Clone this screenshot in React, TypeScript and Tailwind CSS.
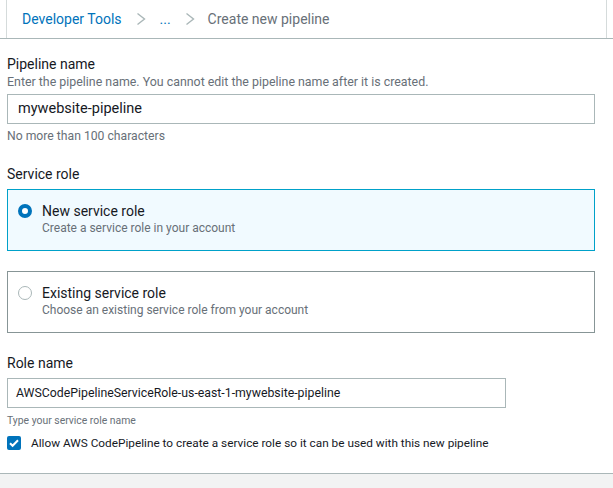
const font = { fontFamily: "Roboto, 'Noto Sans', sans-serif" };

function Chevron() {
  return (
    <svg viewBox="0 0 10 14" className="mx-[14px] h-[14px] w-[10px]">
      <path d="M1.5 1.5L8.5 7L1.5 12.5" fill="none" stroke="#aab7b8" strokeWidth="1.4" />
    </svg>
  );
}

function Tile({
  title,
  desc,
  selected,
}: {
  title: string;
  desc: string;
  selected?: boolean;
}) {
  return (
    <div
      className={
        selected
          ? "mr-[18px] h-[62px] border border-[#00a1c9] bg-[#f1faff] pl-[10px] pt-[11px]"
          : "mr-[18px] h-[62px] border border-[#879596] bg-white pl-[10px] pt-[11px]"
      }
    >
      <div className="flex items-start gap-[10px]">
        <div className="flex h-[20px] items-center">
          {selected ? (
            <span className="block h-[14px] w-[14px] rounded-full border-[4px] border-[#0073bb] bg-white" />
          ) : (
            <span className="block h-[14px] w-[14px] rounded-full border border-[#aab7b8] bg-white" />
          )}
        </div>
        <div>
          <div className="text-[14px] leading-[20px] text-[#16191f]">{title}</div>
          <div className="text-[12px] leading-[14px] text-[#687078]">{desc}</div>
        </div>
      </div>
    </div>
  );
}

export default function App() {
  return (
    <div className="h-[488px] w-[613px] overflow-hidden bg-white" style={font}>
      {/* breadcrumb bar */}
      <div className="border-b border-[#aab7b8]">
        <div className="mx-[6px] flex h-[38px] items-center border-x border-[#d5dbdb] pl-[15px] text-[14px]">
          <span className="text-[#0073bb]">Developer Tools</span>
          <Chevron />
          <span className="text-[#0073bb]">...</span>
          <Chevron />
          <span className="-ml-[1px] text-[#687078]">Create new pipeline</span>
        </div>
      </div>

      <div className="pl-[7px] pt-[15px]">
        <div className="text-[14px] leading-[20px] text-[#16191f]">Pipeline name</div>
        <div className="text-[12.4px] leading-[16px] text-[#687078]">
          Enter the pipeline name. You cannot edit the pipeline name after it is created.
        </div>
        <div className="mr-[18px] mt-[4px] flex h-[30px] items-center border border-[#aab7b8] px-[10px] text-[14.5px] text-[#16191f]">
          mywebsite-pipeline
        </div>
        <div className="mt-[4px] text-[12.2px] leading-[16px] text-[#687078]">
          No more than 100 characters
        </div>

        <div className="mt-[20px] text-[14px] leading-[20px] text-[#16191f]">Service role</div>
        <div className="mt-[5px]">
          <Tile selected title="New service role" desc="Create a service role in your account" />
        </div>
        <div className="mt-[20px]">
          <Tile title="Existing service role" desc="Choose an existing service role from your account" />
        </div>

        <div className="mt-[20px] text-[14px] leading-[20px] text-[#16191f]">Role name</div>
        <div className="mt-[5px] flex h-[30px] w-[499px] items-center border border-[#aab7b8] px-[8px] text-[12.3px] text-[#16191f]">
          AWSCodePipelineServiceRole-us-east-1-mywebsite-pipeline
        </div>
        <div className="mt-[5px] text-[10.4px] leading-[16px] text-[#687078]">Type your service role name</div>
        <div className="mt-[4px] flex items-center gap-[10px]">
          <span className="flex h-[14px] w-[14px] items-center justify-center rounded-[2px] bg-[#0073bb]">
            <svg viewBox="0 0 14 14" className="h-[14px] w-[14px]">
              <path d="M3 7.2l2.6 2.6L11 4.2" fill="none" stroke="#fff" strokeWidth="2" />
            </svg>
          </span>
          <span className="text-[11.8px] leading-[20px] text-[#16191f]">
            Allow AWS CodePipeline to create a service role so it can be used with this new pipeline
          </span>
        </div>
      </div>

      <div className="mt-[20px] h-[40px] border-t border-[#aab7b8] bg-[#f2f3f3]" />
    </div>
  );
}
